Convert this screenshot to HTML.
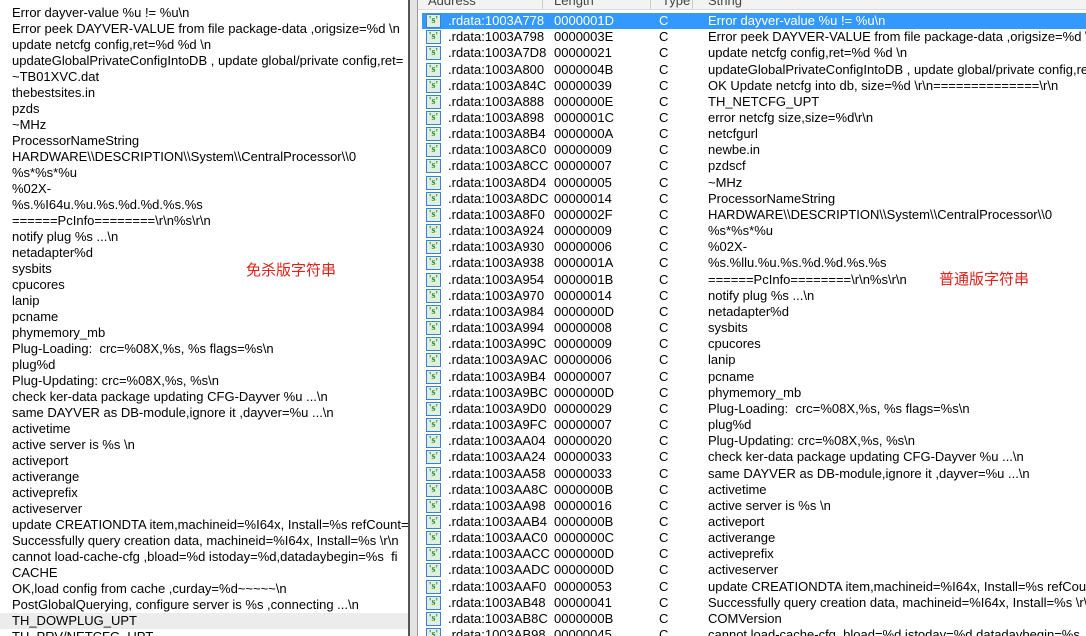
<!DOCTYPE html>
<html><head><meta charset="utf-8"><style>
*{margin:0;padding:0;box-sizing:border-box}
body{width:1086px;height:636px;overflow:hidden;background:#fff;font-family:"Liberation Sans","Noto Sans CJK SC",sans-serif;font-size:13px;color:#000;position:relative}
#left{position:absolute;left:0;top:0;width:408px;height:636px;background:#fff;overflow:hidden}
#left div{position:absolute;left:12px;height:16px;line-height:16px;white-space:nowrap}
#left .hl{left:0;width:408px;padding-left:12px;background:#ececec}
#bar1{position:absolute;left:408px;top:0;width:2px;height:636px;background:#555}
#bar2{position:absolute;left:410px;top:0;width:7px;height:636px;background:#e4e4e4}
#bar3{position:absolute;left:417px;top:0;width:1px;height:636px;background:#999}
#right{position:absolute;left:418px;top:0;width:668px;height:636px;background:#fff;overflow:hidden}
#hdr{position:absolute;left:0;top:0;width:668px;height:10px;background:#f3f3f3;border-bottom:1px solid #ddd;overflow:hidden}
#hdr span{position:absolute;top:-7px;color:#444}
#hdr i{position:absolute;top:0;width:1px;height:10px;background:#ccc}
.r{position:absolute;left:4px;width:664px;height:16px;line-height:16px;white-space:nowrap}
.r.sel{background:#3399ff;color:#fff}
.r span{position:absolute}
.ic{position:absolute;left:4px;top:1px;width:15px;height:14px;border:1px solid #3a7fd0;background:#dff0e0;color:#2a8a2a;font:bold 10px "Liberation Serif",serif;text-align:center;line-height:12px}
.red{position:absolute;color:#e0201a;font-size:15px;font-family:"Noto Sans CJK SC",sans-serif}
</style></head><body>
<div id="left">
<div style="top:5px">Error dayver-value %u != %u\n</div>
<div style="top:21px">Error peek DAYVER-VALUE from file package-data ,origsize=%d \n</div>
<div style="top:37px">update netcfg config,ret=%d %d \n</div>
<div style="top:53px">updateGlobalPrivateConfigIntoDB , update global/private config,ret=</div>
<div style="top:69px">~TB01XVC.dat</div>
<div style="top:85px">thebestsites.in</div>
<div style="top:101px">pzds</div>
<div style="top:117px">~MHz</div>
<div style="top:133px">ProcessorNameString</div>
<div style="top:149px">HARDWARE\\DESCRIPTION\\System\\CentralProcessor\\0</div>
<div style="top:165px">%s*%s*%u</div>
<div style="top:181px">%02X-</div>
<div style="top:197px">%s.%I64u.%u.%s.%d.%d.%s.%s</div>
<div style="top:213px">======PcInfo========\r\n%s\r\n</div>
<div style="top:229px">notify plug %s ...\n</div>
<div style="top:245px">netadapter%d</div>
<div style="top:261px">sysbits</div>
<div style="top:277px">cpucores</div>
<div style="top:293px">lanip</div>
<div style="top:309px">pcname</div>
<div style="top:325px">phymemory_mb</div>
<div style="top:341px">Plug-Loading:&nbsp; crc=%08X,%s, %s flags=%s\n</div>
<div style="top:357px">plug%d</div>
<div style="top:373px">Plug-Updating: crc=%08X,%s, %s\n</div>
<div style="top:389px">check ker-data package updating CFG-Dayver %u ...\n</div>
<div style="top:405px">same DAYVER as DB-module,ignore it ,dayver=%u ...\n</div>
<div style="top:421px">activetime</div>
<div style="top:437px">active server is %s \n</div>
<div style="top:453px">activeport</div>
<div style="top:469px">activerange</div>
<div style="top:485px">activeprefix</div>
<div style="top:501px">activeserver</div>
<div style="top:517px">update CREATIONDTA item,machineid=%I64x, Install=%s refCount=%</div>
<div style="top:533px">Successfully query creation data, machineid=%I64x, Install=%s \r\n</div>
<div style="top:549px">cannot load-cache-cfg ,bload=%d istoday=%d,datadaybegin=%s&nbsp; fi</div>
<div style="top:565px">CACHE</div>
<div style="top:581px">OK,load config from cache ,curday=%d~~~~~\n</div>
<div style="top:597px">PostGlobalQuerying, configure server is %s ,connecting ...\n</div>
<div class="hl" style="top:613px">TH_DOWPLUG_UPT</div>
<div style="top:629px">TH_PRV/NETCFG_UPT</div>
<span class="red" style="left:246px;top:259px">免杀版字符串</span>
</div>
<div id="bar1"></div><div id="bar2"></div><div id="bar3"></div>
<div id="right">
<div id="hdr"><span style="left:10px">Address</span><i style="left:124px"></i><span style="left:136px">Length</span><i style="left:232px"></i><span style="left:244px">Type</span><i style="left:274px"></i><span style="left:290px">String</span></div>
<div id="rows"></div>
<span class="red" style="left:521px;top:268px">普通版字符串</span>
</div>
<script>
var d=[["1003A778","0000001D","Error dayver-value %u != %u\\n"],["1003A798","0000003E","Error peek DAYVER-VALUE from file package-data ,origsize=%d \\n"],["1003A7D8","00000021","update netcfg config,ret=%d %d \\n"],["1003A800","0000004B","updateGlobalPrivateConfigIntoDB , update global/private config,ret="],["1003A84C","00000039","OK Update netcfg into db, size=%d \\r\\n==============\\r\\n"],["1003A888","0000000E","TH_NETCFG_UPT"],["1003A898","0000001C","error netcfg size,size=%d\\r\\n"],["1003A8B4","0000000A","netcfgurl"],["1003A8C0","00000009","newbe.in"],["1003A8CC","00000007","pzdscf"],["1003A8D4","00000005","~MHz"],["1003A8DC","00000014","ProcessorNameString"],["1003A8F0","0000002F","HARDWARE\\\\DESCRIPTION\\\\System\\\\CentralProcessor\\\\0"],["1003A924","00000009","%s*%s*%u"],["1003A930","00000006","%02X-"],["1003A938","0000001A","%s.%llu.%u.%s.%d.%d.%s.%s"],["1003A954","0000001B","======PcInfo========\\r\\n%s\\r\\n"],["1003A970","00000014","notify plug %s ...\\n"],["1003A984","0000000D","netadapter%d"],["1003A994","00000008","sysbits"],["1003A99C","00000009","cpucores"],["1003A9AC","00000006","lanip"],["1003A9B4","00000007","pcname"],["1003A9BC","0000000D","phymemory_mb"],["1003A9D0","00000029","Plug-Loading:  crc=%08X,%s, %s flags=%s\\n"],["1003A9FC","00000007","plug%d"],["1003AA04","00000020","Plug-Updating: crc=%08X,%s, %s\\n"],["1003AA24","00000033","check ker-data package updating CFG-Dayver %u ...\\n"],["1003AA58","00000033","same DAYVER as DB-module,ignore it ,dayver=%u ...\\n"],["1003AA8C","0000000B","activetime"],["1003AA98","00000016","active server is %s \\n"],["1003AAB4","0000000B","activeport"],["1003AAC0","0000000C","activerange"],["1003AACC","0000000D","activeprefix"],["1003AADC","0000000D","activeserver"],["1003AAF0","00000053","update CREATIONDTA item,machineid=%I64x, Install=%s refCount=%d"],["1003AB48","00000041","Successfully query creation data, machineid=%I64x, Install=%s \\r\\n"],["1003AB8C","0000000B","COMVersion"],["1003AB98","00000045","cannot load-cache-cfg ,bload=%d istoday=%d,datadaybegin=%s"]];
var h="";
function esc(s){return s.replace(/&/g,"&amp;").replace(/</g,"&lt;").replace(/ {2}/g," &nbsp;");}
d.forEach(function(r,i){
h+='<div class="r'+(i==0?' sel':'')+'" style="top:'+(13+i*16.16).toFixed(1)+'px"><i class="ic">\'s\'</i><span style="left:26px">.rdata:'+r[0]+'</span><span style="left:132px">'+r[1]+'</span><span style="left:237px">C</span><span style="left:286px">'+esc(r[2])+'</span></div>';
});
document.getElementById("rows").innerHTML=h;
</script>
</body></html>
